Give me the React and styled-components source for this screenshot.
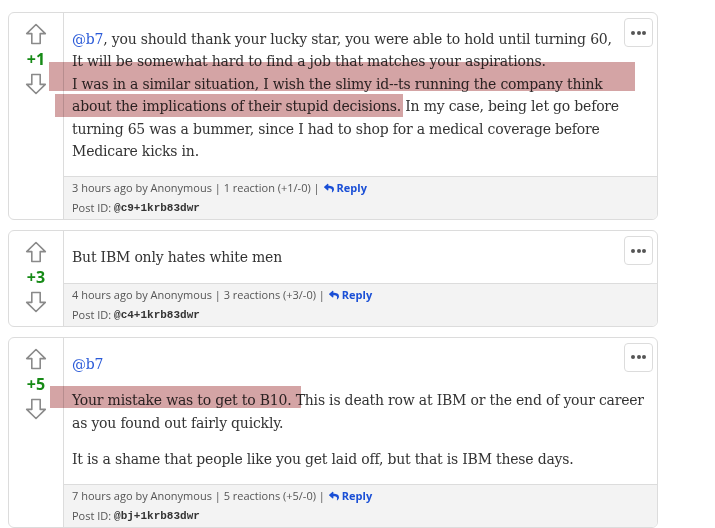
import React from "react";
import styled, { createGlobalStyle } from "styled-components";
import { FaReply } from "react-icons/fa";

const Global = createGlobalStyle`
  html, body { background: #fff; }
  body { margin: 8px; font-family: "Open Sans", sans-serif; overflow: hidden; }
`;

const Heading = styled.h2`
  margin: -28px 0 0 0;
  height: 30px;
  overflow: hidden;
  font-family: "DejaVu Serif", serif;
  font-size: 22px;
  font-weight: bold;
  line-height: 30px;
  color: #222;
  padding-left: 40px;
  white-space: nowrap;
`;

const List = styled.div`
  width: 650px;
  margin-top: 2px;
  display: flex;
  flex-direction: column;
  gap: 10px;
`;

const Card = styled.div`
  position: relative;
  display: flex;
  border: 1px solid #dcdcdc;
  border-radius: 6px;
  overflow: hidden;
  background: #fff;
`;

const VoteCol = styled.div`
  width: 54px;
  flex: none;
  border-right: 1px solid #dcdcdc;
  display: flex;
  flex-direction: column;
  align-items: center;
  gap: 4px;
  padding-top: 10px;
`;

const Score = styled.div`
  font-family: "Open Sans", sans-serif;
  font-weight: 700;
  font-size: 16px;
  line-height: 20px;
  color: #168a16;
`;

const Main = styled.div`
  flex: 1;
  display: flex;
  flex-direction: column;
  min-width: 0;
`;

const Body = styled.div`
  padding: 15px 40px 14px 8px;
  font-family: "DejaVu Serif", serif;
  font-size: 14px;
  letter-spacing: -0.2px;
  line-height: 22.4px;
  color: #333;
  white-space: nowrap;
`;

const Para = styled.p`
  margin: 0;
  & + & { margin-top: 14px; }
`;

const Mention = styled.span`
  color: #2a5ad8;
`;

const Footer = styled.div`
  background: #f3f3f3;
  border-top: 1px solid #dcdcdc;
  padding: 1px 8px 1px;
  font-family: "Open Sans", sans-serif;
  font-size: 11px;
  line-height: 20px;
  color: #555;
`;

const FooterLine = styled.div`
  display: flex;
  align-items: center;
  white-space: pre;
`;

const ReplyLink = styled.a`
  display: inline-flex;
  align-items: center;
  gap: 3px;
  color: #1a4fd6;
  font-weight: 700;
  text-decoration: none;
  margin-left: 4px;
`;

const PostId = styled.span`
  font-family: "Liberation Mono", monospace;
  font-weight: 700;
  font-size: 11px;
  color: #333;
`;

const MenuButton = styled.button`
  position: absolute;
  top: 5px;
  right: 4px;
  width: 29px;
  height: 29px;
  border: 1px solid #dcdcdc;
  border-radius: 4px;
  background: #fff;
  display: flex;
  align-items: center;
  justify-content: center;
  gap: 1.5px;
  padding: 0;
`;

const Dot = styled.span`
  width: 4px;
  height: 4px;
  border-radius: 50%;
  background: #555;
`;

const Highlight = styled.div`
  position: absolute;
  left: ${(p) => p.$left}px;
  top: ${(p) => p.$top}px;
  width: ${(p) => p.$w}px;
  height: ${(p) => p.$h}px;
  background: #d4a4a5;
  mix-blend-mode: multiply;
  pointer-events: none;
`;

const Arrow = ({ down }) => (
  <svg
    width="22"
    height="22"
    viewBox="0 0 22 22"
    style={down ? { transform: "rotate(180deg)" } : undefined}
  >
    <path
      d="M11 1.5 L20.3 10.6 H15.2 V20.5 H6.8 V10.6 H1.7 Z"
      fill="none"
      stroke="#8a8a8a"
      strokeWidth="1.6"
      strokeLinejoin="round"
    />
  </svg>
);

const Menu = () => (
  <MenuButton aria-label="menu">
    <Dot />
    <Dot />
    <Dot />
  </MenuButton>
);

const Post = ({ score, children, time, reactions, id, highlights = [] }) => (
  <Card>
    <VoteCol>
      <Arrow />
      <Score>{score}</Score>
      <Arrow down />
    </VoteCol>
    <Main>
      <Body>{children}</Body>
      <Footer>
        <FooterLine>
          {`${time} by Anonymous | ${reactions} |`}
          <ReplyLink href="#">
            <FaReply size={10} />
            Reply
          </ReplyLink>
        </FooterLine>
        <FooterLine>
          {"Post ID: "}
          <PostId>{id}</PostId>
        </FooterLine>
      </Footer>
    </Main>
    <Menu />
    {highlights.map((h, i) => (
      <Highlight key={i} $left={h[0]} $top={h[1]} $w={h[2]} $h={h[3]} />
    ))}
  </Card>
);

export default function App() {
  return (
    <>
      <Global />
      <Heading>Top replies (most popular replies to this post, top)</Heading>
      <List>
        <Post
          score="+1"
          time="3 hours ago"
          reactions="1 reaction (+1/-0)"
          id="@c9+1krb83dwr"
          highlights={[
            [40, 49, 586, 29],
            [46, 81, 348, 23],
          ]}
        >
          <Para>
            <Mention>@b7</Mention>, you should thank your lucky star, you were able to hold until turning 60,
            <br />
            It will be somewhat hard to find a job that matches your aspirations.
            <br />
            I was in a similar situation, I wish the slimy id--ts running the company think
            <br />
            about the implications of their stupid decisions. In my case, being let go before
            <br />
            turning 65 was a bummer, since I had to shop for a medical coverage before
            <br />
            Medicare kicks in.
          </Para>
        </Post>
        <Post
          score="+3"
          time="4 hours ago"
          reactions="3 reactions (+3/-0)"
          id="@c4+1krb83dwr"
        >
          <Para>But IBM only hates white men</Para>
        </Post>
        <Post
          score="+5"
          time="7 hours ago"
          reactions="5 reactions (+5/-0)"
          id="@bj+1krb83dwr"
          highlights={[[41, 48, 251, 22]]}
        >
          <Para>
            <Mention>@b7</Mention>
          </Para>
          <Para>
            Your mistake was to get to B10. This is death row at IBM or the end of your career
            <br />
            as you found out fairly quickly.
          </Para>
          <Para>It is a shame that people like you get laid off, but that is IBM these days.</Para>
        </Post>
      </List>
    </>
  );
}
